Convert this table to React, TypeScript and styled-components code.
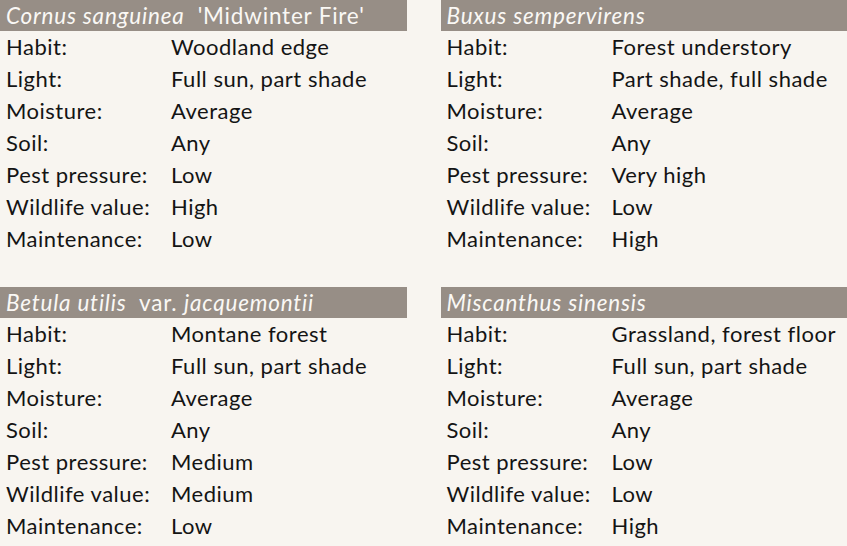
import { ReactNode } from "react";
import styled, { createGlobalStyle } from "styled-components";

const GlobalStyle = createGlobalStyle`
  html, body {
    margin: 0;
    padding: 0;
    background: #f8f5f0;
  }
  body {
    font-family: Lato, "Open Sans", sans-serif;
    color: #141414;
  }
`;

const Grid = styled.div`
  display: grid;
  grid-template-columns: 1fr 1fr;
  column-gap: 34px;
  row-gap: 32px;
  width: 847px;
`;

const Card = styled.section`
  display: flex;
  flex-direction: column;
`;

const Header = styled.h2`
  margin: 0;
  height: 31px;
  padding-left: 6px;
  display: flex;
  align-items: center;
  background: #978e86;
  color: #faf8f5;
  font-size: 22.5px;
  font-weight: 400;
  letter-spacing: 0.8px;
  white-space: pre;
`;

const Latin = styled.i`
  font-style: italic;
`;

const Row = styled.div`
  display: grid;
  grid-template-columns: 165px 1fr;
  height: 32px;
  align-items: center;
  padding-left: 6px;
  padding-bottom: 2px;
  box-sizing: border-box;
  font-size: 22px;
  letter-spacing: 0.5px;
`;

interface Plant {
  title: ReactNode;
  habit: string;
  light: string;
  moisture: string;
  soil: string;
  pest: string;
  wildlife: string;
  maintenance: string;
}

const plants: Plant[] = [
  {
    title: (
      <>
        <Latin>Cornus sanguinea</Latin>  'Midwinter Fire'
      </>
    ),
    habit: "Woodland edge",
    light: "Full sun, part shade",
    moisture: "Average",
    soil: "Any",
    pest: "Low",
    wildlife: "High",
    maintenance: "Low",
  },
  {
    title: <Latin>Buxus sempervirens</Latin>,
    habit: "Forest understory",
    light: "Part shade, full shade",
    moisture: "Average",
    soil: "Any",
    pest: "Very high",
    wildlife: "Low",
    maintenance: "High",
  },
  {
    title: (
      <>
        <Latin>Betula utilis</Latin>  var. <Latin>jacquemontii</Latin>
      </>
    ),
    habit: "Montane forest",
    light: "Full sun, part shade",
    moisture: "Average",
    soil: "Any",
    pest: "Medium",
    wildlife: "Medium",
    maintenance: "Low",
  },
  {
    title: <Latin>Miscanthus sinensis</Latin>,
    habit: "Grassland, forest floor",
    light: "Full sun, part shade",
    moisture: "Average",
    soil: "Any",
    pest: "Low",
    wildlife: "Low",
    maintenance: "High",
  },
];

const PlantCard = ({ plant }: { plant: Plant }) => {
  const rows: [string, string][] = [
    ["Habit:", plant.habit],
    ["Light:", plant.light],
    ["Moisture:", plant.moisture],
    ["Soil:", plant.soil],
    ["Pest pressure:", plant.pest],
    ["Wildlife value:", plant.wildlife],
    ["Maintenance:", plant.maintenance],
  ];
  return (
    <Card>
      <Header>{plant.title}</Header>
      {rows.map(([label, value]) => (
        <Row key={label}>
          <span>{label}</span>
          <span>{value}</span>
        </Row>
      ))}
    </Card>
  );
};

export default function App() {
  return (
    <>
      <GlobalStyle />
      <Grid>
        {plants.map((p, i) => (
          <PlantCard key={i} plant={p} />
        ))}
      </Grid>
    </>
  );
}
